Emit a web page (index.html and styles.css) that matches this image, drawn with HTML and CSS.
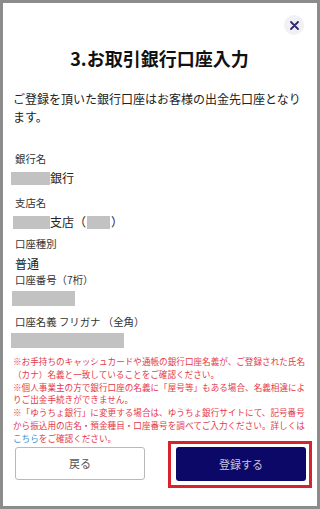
FILE: index.html
```html
<!DOCTYPE html>
<html lang="ja">
<head>
    <meta charset="UTF-8">
    <meta name="viewport" content="width=device-width, initial-scale=1.0">
    <title>お取引銀行口座入力</title>
    <link rel="stylesheet" href="styles.css">
</head>
<body>
    <div class="modal">
        <div class="close-row">
            <button class="close-btn" aria-label="閉じる">
                <svg width="9" height="9" viewBox="0 0 9 9"><path d="M1 1L8 8M8 1L1 8" stroke="#2e2c6e" stroke-width="1.8" stroke-linecap="round"/></svg>
            </button>
        </div>

        <h1>3.お取引銀行口座入力</h1>
        <p class="lead">ご登録を頂いた銀行口座はお客様の出金先口座となります。</p>

        <div class="label first">銀行名</div>
        <div class="value v-bank"><span class="mask w39"></span>銀行</div>

        <div class="label l-branch">支店名</div>
        <div class="value v-branch"><span class="mask w37"></span>支店（<span class="mask w23"></span>）</div>

        <div class="label l-type">口座種別</div>
        <div class="value v-type">普通</div>

        <div class="label l-num">口座番号（7桁）</div>
        <div class="mask-line w63"></div>

        <div class="label l-name">口座名義 フリガナ （全角）</div>
        <div class="mask-line w113"></div>

        <p class="note">※お手持ちのキャッシュカードや通帳の銀行口座名義が、ご登録された氏名（カナ）名義と一致していることをご確認ください。<br>※個人事業主の方で銀行口座の名義に「屋号等」もある場合、名義相違によりご出金手続きができません。<br>※「ゆうちょ銀行」に変更する場合は、ゆうちょ銀行サイトにて、記号番号から振込用の店名・預金種目・口座番号を調べてご入力ください。詳しくは<a href="#">こちら</a>をご確認ください。</p>

        <div class="buttons">
            <button class="btn btn-back">戻る</button>
            <div class="submit-wrap">
                <button class="btn btn-submit">登録する</button>
                <span class="highlight"></span>
            </div>
        </div>
    </div>
</body>
</html>
```

FILE: styles.css
```css
html, body {
    margin: 0;
    padding: 0;
}
body {
    background-color: #8c8c8c;
    font-family: "Noto Sans CJK JP", "Noto Sans", sans-serif;
    color: #222;
    padding: 3px 3px 0 3px;
    height: 509px;
    box-sizing: border-box;
}
.modal {
    position: relative;
    background-color: #fff;
    height: 503px;
    padding: 0 10px 0 9px;
    box-sizing: border-box;
}
.close-row {
    display: flex;
    justify-content: flex-end;
    height: 43px;
    padding-top: 12px;
    box-sizing: border-box;
}
.close-btn {
    width: 20px;
    height: 20px;
    margin-right: 3px;
    border: none;
    border-radius: 50%;
    background-color: #f1f1f5;
    padding: 0;
    display: flex;
    align-items: center;
    justify-content: center;
}
h1 {
    margin: 0;
    font-size: 18px;
    line-height: 24px;
    font-weight: bold;
    text-align: center;
    color: #111;
}
.lead {
    margin: 20px 0 0 0;
    font-size: 12px;
    line-height: 18px;
    padding-left: 1px;
}
.label {
    font-size: 10.4px;
    line-height: 14px;
    color: #333;
    padding-left: 3px;
}
.label.first { margin-top: 26px; }
.label.l-branch { margin-top: 10px; }
.label.l-type { margin-top: 7px; }
.label.l-num { margin-top: 1px; }
.label.l-name { margin-top: 9px; }
.value {
    display: flex;
    align-items: center;
    font-size: 12px;
    line-height: 16px;
    color: #222;
}
.v-bank { margin-top: 4px; margin-left: -1px; }
.v-branch { margin-top: 4px; margin-left: 1px; }
.v-type { margin-top: 5px; padding-left: 3px; }
.mask {
    display: inline-block;
    height: 13px;
    background-color: #c2c2c2;
}
.w39 { width: 39px; }
.w37 { width: 37px; }
.w23 { width: 23px; margin: 0 1px; }
.mask-line {
    height: 15px;
    margin-top: 4px;
    background-color: #c2c2c2;
}
.w63 { width: 63px; }
.w113 { width: 113px; margin-left: -1px; }
.note {
    margin: 7px 0 0 0;
    padding-left: 1px;
    font-size: 8.6px;
    line-height: 12.8px;
    color: #e53a4a;
}
.note a {
    color: #3b8fd3;
    text-decoration: none;
}
.buttons {
    display: grid;
    grid-template-columns: 1fr 1fr;
    gap: 31px;
    margin-top: 2px;
    padding-left: 3px;
    padding-right: 1px;
}
.btn {
    width: 100%;
    height: 33px;
    border-radius: 3px;
    font-family: inherit;
    font-size: 11px;
}
.btn-back {
    background-color: #fff;
    border: 1px solid #b9b9b9;
    color: #555;
}
.submit-wrap {
    position: relative;
}
.btn-submit {
    background-color: #0b0868;
    border: none;
    color: #c6c6de;
    height: 34px;
}
.highlight {
    position: absolute;
    left: -8px;
    top: -6px;
    right: -6px;
    bottom: -7px;
    border: 3px solid #d8232c;
}
```
